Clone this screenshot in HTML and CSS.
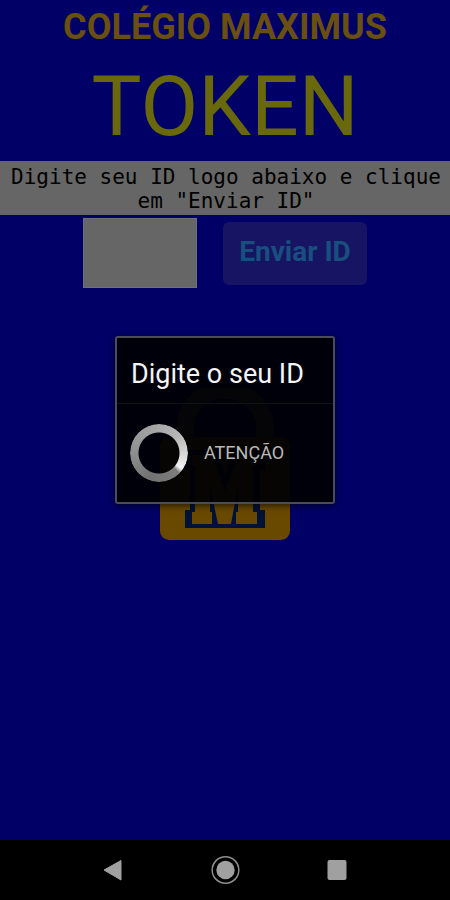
FILE: index.html
```html
<!DOCTYPE html>
<html lang="pt-BR">
<head>
<meta charset="utf-8">
<meta name="viewport" content="width=device-width, initial-scale=1">
<title>Colégio Maximus - Token</title>
<link rel="stylesheet" href="styles.css">
</head>
<body>
<main class="screen">
  <h1 class="school">COLÉGIO MAXIMUS</h1>
  <p class="token">TOKEN</p>
  <label class="hint" for="student-id">Digite seu ID logo abaixo e clique em "Enviar ID"</label>
  <form class="id-form">
    <input class="id-field" id="student-id" type="text">
    <button class="send" type="button">Enviar ID</button>
  </form>
  <svg class="lock" viewBox="0 0 132 152" aria-hidden="true">
    <path d="M26 54V40a40 38 0 0 1 80 0v14" fill="none" stroke="#4d4d4d" stroke-width="17"/>
    <rect x="1" y="49" width="130" height="103" rx="9" fill="#694800"/>
    <path d="M26 62h33l7 26 7-26h33v20h-5v40h5v18H26v-18h5V82h-5z" fill="#001238"/>
    <path d="M33 67h20l13 36 13-36h19v11h-4v46h4v12H77v-12h2V98L72 136H59L51 98v26h2v12H33v-12h3V78h-3z" fill="#694800"/>
  </svg>
  <section class="dialog" role="dialog" aria-labelledby="dialog-title">
    <h2 class="dialog-title" id="dialog-title">Digite o seu ID</h2>
    <div class="dialog-body">
      <span class="spinner"></span>
      <span class="message">ATENÇÃO</span>
    </div>
  </section>
</main>
<nav class="navbar">
  <button class="nav-button" type="button" aria-label="Voltar">
    <svg width="30" height="30" viewBox="0 0 30 30"><path d="M6 15 23 5.500V25z" fill="#a0a0a0" stroke="#a0a0a0" stroke-linejoin="round"/></svg>
  </button>
  <button class="nav-button" type="button" aria-label="Início">
    <svg width="30" height="30" viewBox="0 0 30 30"><circle cx="15.500" cy="15" r="13.300" fill="none" stroke="#8e8e8e" stroke-width="1.500"/><circle cx="15.500" cy="15" r="9.200" fill="#a0a0a0"/></svg>
  </button>
  <button class="nav-button" type="button" aria-label="Recentes">
    <svg width="30" height="30" viewBox="0 0 30 30"><rect x="5.500" y="5" width="19" height="20" rx="2" fill="#a0a0a0"/></svg>
  </button>
</nav>
</body>
</html>
```
FILE: styles.css
```css
* {
  box-sizing: border-box;
}

body {
  margin: 0;
  min-height: 100vh;
  display: flex;
  flex-direction: column;
  background: #000066;
  font-family: Roboto, "Liberation Sans", sans-serif;
}

.screen {
  position: relative;
  flex: 1;
  display: flex;
  flex-direction: column;
  align-items: center;
}

.school {
  margin: 5px 0 0;
  font-size: 36px;
  line-height: 44px;
  font-weight: 700;
  color: #694f10;
}

.token {
  margin: 8px 0 4px;
  font-size: 84px;
  line-height: 100px;
  color: #69690c;
}

.hint {
  align-self: stretch;
  padding: 4px 0 2px 2px;
  background: #666666;
  color: #000000;
  font-family: "DejaVu Sans Mono", monospace;
  font-size: 21px;
  line-height: 24px;
  text-align: center;
}

.id-form {
  display: flex;
  align-items: center;
  gap: 26px;
  padding-top: 3px;
}

.id-field {
  width: 114px;
  height: 70px;
  padding: 8px;
  border: 1px solid #707078;
  background: #666666;
  font: inherit;
  font-size: 28px;
}

.send {
  height: 63px;
  padding: 0 16px 4px;
  border: 0;
  border-radius: 6px;
  background: #171463;
  color: #184f7e;
  font: inherit;
  font-size: 28px;
  font-weight: 700;
}

.lock {
  width: 132px;
  margin-top: 100px;
}

.dialog {
  position: absolute;
  top: 50%;
  left: 50%;
  transform: translate(-50%, -50%);
  width: 220px;
  border: 2px solid #4a4d55;
  border-radius: 3px;
  background: rgba(0, 0, 3, 0.93);
  box-shadow: 0 2px 6px rgba(0, 0, 0, 0.6);
}

.dialog-title {
  margin: 0;
  padding: 20px 14px 13px;
  border-bottom: 1px solid #10131a;
  color: #f4f4f4;
  font-size: 27px;
  line-height: 32px;
  font-weight: 400;
}

.dialog-body {
  display: flex;
  align-items: center;
  gap: 16px;
  padding: 20px 13px;
}

.spinner {
  width: 58px;
  height: 58px;
  border-radius: 50%;
  background: conic-gradient(#a8a8a8, #b8b8b8 50deg, #f2f2f2 125deg, #7c7c7c 135deg, #727272 200deg, #929292 280deg, #a8a8a8);
  mask: radial-gradient(circle, transparent 20px, #000000 21px);
}

.message {
  color: #b8b8b8;
  font-size: 18px;
  line-height: 24px;
}

.navbar {
  display: flex;
  justify-content: center;
  gap: 56px;
  padding: 2px 0;
  background: #000000;
}

.nav-button {
  width: 56px;
  height: 56px;
  padding: 0;
  border: 0;
  background: none;
}

.nav-button svg {
  display: block;
  margin: auto;
}
```
